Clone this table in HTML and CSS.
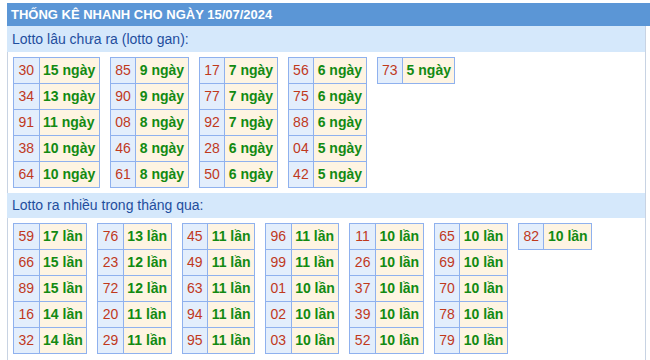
FILE: index.html
```html
<!DOCTYPE html>
<html lang="vi">
<head>
<meta charset="utf-8">
<title>Thống kê nhanh</title>
<link rel="stylesheet" href="styles.css">
</head>
<body>
<div class="page">
  <div class="title">THỐNG KÊ NHANH CHO NGÀY 15/07/2024</div>
  <div class="box">
    <div class="sub first">Lotto lâu chưa ra (lotto gan):</div>
    <div class="tables">
      <table class="lt"><tr><td class="n">30</td><td class="v">15 ngày</td></tr><tr><td class="n">34</td><td class="v">13 ngày</td></tr><tr><td class="n">91</td><td class="v">11 ngày</td></tr><tr><td class="n">38</td><td class="v">10 ngày</td></tr><tr><td class="n">64</td><td class="v">10 ngày</td></tr></table>
      <table class="lt"><tr><td class="n">85</td><td class="v">9 ngày</td></tr><tr><td class="n">90</td><td class="v">9 ngày</td></tr><tr><td class="n">08</td><td class="v">8 ngày</td></tr><tr><td class="n">46</td><td class="v">8 ngày</td></tr><tr><td class="n">61</td><td class="v">8 ngày</td></tr></table>
      <table class="lt"><tr><td class="n">17</td><td class="v">7 ngày</td></tr><tr><td class="n">77</td><td class="v">7 ngày</td></tr><tr><td class="n">92</td><td class="v">7 ngày</td></tr><tr><td class="n">28</td><td class="v">6 ngày</td></tr><tr><td class="n">50</td><td class="v">6 ngày</td></tr></table>
      <table class="lt"><tr><td class="n">56</td><td class="v">6 ngày</td></tr><tr><td class="n">75</td><td class="v">6 ngày</td></tr><tr><td class="n">88</td><td class="v">6 ngày</td></tr><tr><td class="n">04</td><td class="v">5 ngày</td></tr><tr><td class="n">42</td><td class="v">5 ngày</td></tr></table>
      <table class="lt"><tr><td class="n">73</td><td class="v">5 ngày</td></tr></table>
    </div>
    <div class="sub">Lotto ra nhiều trong tháng qua:</div>
    <div class="tables">
      <table class="lt"><tr><td class="n">59</td><td class="v">17 lần</td></tr><tr><td class="n">66</td><td class="v">15 lần</td></tr><tr><td class="n">89</td><td class="v">15 lần</td></tr><tr><td class="n">16</td><td class="v">14 lần</td></tr><tr><td class="n">32</td><td class="v">14 lần</td></tr></table>
      <table class="lt"><tr><td class="n">76</td><td class="v">13 lần</td></tr><tr><td class="n">23</td><td class="v">12 lần</td></tr><tr><td class="n">72</td><td class="v">12 lần</td></tr><tr><td class="n">20</td><td class="v">11 lần</td></tr><tr><td class="n">29</td><td class="v">11 lần</td></tr></table>
      <table class="lt"><tr><td class="n">45</td><td class="v">11 lần</td></tr><tr><td class="n">49</td><td class="v">11 lần</td></tr><tr><td class="n">63</td><td class="v">11 lần</td></tr><tr><td class="n">94</td><td class="v">11 lần</td></tr><tr><td class="n">95</td><td class="v">11 lần</td></tr></table>
      <table class="lt"><tr><td class="n">96</td><td class="v">11 lần</td></tr><tr><td class="n">99</td><td class="v">11 lần</td></tr><tr><td class="n">01</td><td class="v">10 lần</td></tr><tr><td class="n">02</td><td class="v">10 lần</td></tr><tr><td class="n">03</td><td class="v">10 lần</td></tr></table>
      <table class="lt"><tr><td class="n">11</td><td class="v">10 lần</td></tr><tr><td class="n">26</td><td class="v">10 lần</td></tr><tr><td class="n">37</td><td class="v">10 lần</td></tr><tr><td class="n">39</td><td class="v">10 lần</td></tr><tr><td class="n">52</td><td class="v">10 lần</td></tr></table>
      <table class="lt"><tr><td class="n">65</td><td class="v">10 lần</td></tr><tr><td class="n">69</td><td class="v">10 lần</td></tr><tr><td class="n">70</td><td class="v">10 lần</td></tr><tr><td class="n">78</td><td class="v">10 lần</td></tr><tr><td class="n">79</td><td class="v">10 lần</td></tr></table>
      <table class="lt"><tr><td class="n">82</td><td class="v">10 lần</td></tr></table>
    </div>
  </div>
</div>
</body>
</html>
```

FILE: styles.css
```css
html, body {
  margin: 0;
  padding: 0;
  background: #ffffff;
}
body {
  font-family: "Liberation Sans", Arial, sans-serif;
  font-size: 14px;
  overflow: hidden;
}
.page {
  padding: 3px 0 0 7px;
}
.title {
  height: 23px;
  line-height: 23px;
  background: #5b96d6;
  color: #ffffff;
  font-weight: bold;
  font-size: 13px;
  padding-left: 4px;
  white-space: nowrap;
}
.box {
  width: 637px;
  border-left: 1px solid #c8d3e3;
  border-right: 1px solid #c8d3e3;
  padding-bottom: 10px;
}
.sub {
  height: 25px;
  line-height: 25px;
  background: #d5e8fb;
  color: #1f4e9e;
  padding-left: 5px;
  margin-left: -1px;
}
.sub.first {
  height: 26px;
  line-height: 26px;
  border-top: 0;
}
.tables {
  display: flex;
  align-items: flex-start;
  gap: 10px;
  padding: 5px 5px;
}
.lt {
  border-collapse: collapse;
}
.lt td {
  border: 1px solid #8fb1ee;
  height: 25px;
  line-height: 25px;
  padding: 0;
  white-space: nowrap;
}
.lt .n {
  background: #e3eefc;
  color: #c0391c;
  padding: 0 4.5px;
  text-align: center;
}
.lt .v {
  background: #fef4e2;
  color: #128a12;
  font-weight: bold;
  padding: 0 3.5px;
}
```
